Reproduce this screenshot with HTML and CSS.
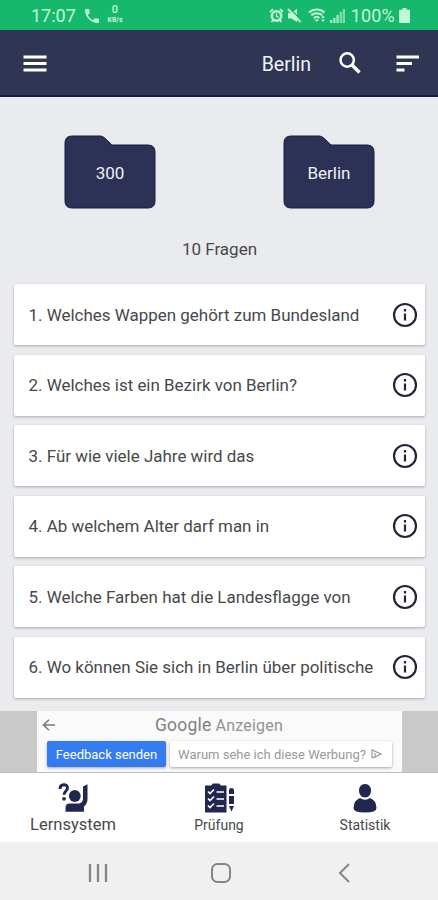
FILE: index.html
```html
<!DOCTYPE html>
<html lang="de">
<head>
<meta charset="utf-8">
<title>Lernsystem</title>
<link rel="stylesheet" href="styles.css">
</head>
<body>
<div class="phone">
  <div class="status">
    <span class="clock">17:07</span>
    <svg class="call" width="14" height="14" viewBox="3 3 18 18"><path fill="currentColor" d="M6.600 10.800c1.400 2.800 3.800 5.100 6.600 6.600l2.200-2.200c.3-.3.700-.4 1-.2 1.100.4 2.300.6 3.600.6.600 0 1 .4 1 1V20c0 .6-.4 1-1 1C10.600 21 3 13.400 3 4c0-.6.400-1 1-1h3.500c.6 0 1 .4 1 1 0 1.200.2 2.400.6 3.600.1.300 0 .7-.2 1z"/></svg>
    <span class="speed"><b>0</b><i>KB/s</i></span>
    <span class="right">
      <svg width="15" height="15" viewBox="0 0 15 15" fill="none" stroke="currentColor"><circle cx="7.500" cy="8" r="4.700" stroke-width="2.600"/><path stroke-width="1.800" d="M1 4l3-2.800M14 4l-3-2.800M2.500 14l1.800-2M12.500 14l-1.800-2"/><path stroke-width="1.300" d="M7.500 5.500v2.800l2 1"/></svg>
      <svg class="mute" width="15" height="15" viewBox="0 0 15 15"><path fill="currentColor" d="M1 5h3.500L10 .8V14l-5.500-3.500H1z"/><path d="M2.500 0l12.500 13" stroke="#16b96b" stroke-width="1.500"/><path d="M1 1l12.500 13" stroke="currentColor" stroke-width="2"/></svg>
      <svg class="wifi" width="19" height="15" viewBox="0 0 19 15" fill="none" stroke="currentColor" stroke-width="1.900"><path d="M1 4.500c4.500-4 11-4 15.500 0M3.300 7.300c3-2.700 8-2.700 11 0M5.800 10c1.800-1.500 4-1.500 5.500 0"/><path fill="currentColor" stroke="none" d="M6.500 11.500h4.500l-2.200 2.500zM13 10l2-2.500L17 10zM13 11.500h4L15 14z"/></svg>
      <svg class="signal" width="15" height="14" viewBox="0 0 15 14" fill="currentColor"><path opacity=".8" d="M0 11h2.300v3H0zM3.200 9h2.300v5H3.200zM6.400 6h2.300v8H6.400z"/><path opacity=".6" d="M9.600 3h2.300v11H9.600zM12.700 0H15v14h-2.300z"/></svg>
      <span class="percent">100%</span>
      <svg width="11" height="15" viewBox="0 0 11 15"><path fill="currentColor" d="M3.500 0h4v1.800H10q1 0 1 1V14q0 1-1 1H1q-1 0-1-1V2.800q0-1 1-1h2.500z"/></svg>
    </span>
  </div>
  <header class="appbar">
    <svg class="menu" width="24" height="18" viewBox="0 0 24 18" fill="#fff"><path d="M.5 1.500h23v3H.5zM.5 8h23v3H.5zM.5 14.500h23v3H.5z"/></svg>
    <span class="title">Berlin</span>
    <svg class="search" width="24" height="24" viewBox="0 0 24 24" fill="none" stroke="#fff"><circle cx="9.200" cy="9" r="6.700" stroke-width="2.500"/><path d="M14 14l7.500 7.500" stroke-width="3.300"/></svg>
    <svg class="sort" width="24" height="18" viewBox="0 0 24 18" fill="#fff"><path d="M.5 1.500H23v3H.5zM.5 8h15.500v3H.5zM.5 14.500h8v3H.5z"/></svg>
  </header>
  <main>
    <div class="folders">
      <div class="folder"><svg width="92" height="74" viewBox="0 0 92 74"><path d="M8 1h28q2.500 0 4.500 1.800L48 10h36q7 0 7 7v49q0 7-7 7H8q-7 0-7-7V8q0-7 7-7z"/></svg><span>300</span></div>
      <div class="folder"><svg width="92" height="74" viewBox="0 0 92 74"><path d="M8 1h28q2.500 0 4.500 1.800L48 10h36q7 0 7 7v49q0 7-7 7H8q-7 0-7-7V8q0-7 7-7z"/></svg><span>Berlin</span></div>
    </div>
    <p class="count">10 Fragen</p>
    <div class="list">
      <div class="card"><span>1. Welches Wappen gehört zum Bundesland</span><svg class="info" viewBox="0 0 26 26"><circle cx="13" cy="13" r="11"/><path d="M13 11.500v7M13 7v2.500"/></svg></div>
      <div class="card"><span>2. Welches ist ein Bezirk von Berlin?</span><svg class="info" viewBox="0 0 26 26"><circle cx="13" cy="13" r="11"/><path d="M13 11.500v7M13 7v2.500"/></svg></div>
      <div class="card"><span>3. Für wie viele Jahre wird das</span><svg class="info" viewBox="0 0 26 26"><circle cx="13" cy="13" r="11"/><path d="M13 11.500v7M13 7v2.500"/></svg></div>
      <div class="card"><span>4. Ab welchem Alter darf man in</span><svg class="info" viewBox="0 0 26 26"><circle cx="13" cy="13" r="11"/><path d="M13 11.500v7M13 7v2.500"/></svg></div>
      <div class="card"><span>5. Welche Farben hat die Landesflagge von</span><svg class="info" viewBox="0 0 26 26"><circle cx="13" cy="13" r="11"/><path d="M13 11.500v7M13 7v2.500"/></svg></div>
      <div class="card"><span>6. Wo können Sie sich in Berlin über politische</span><svg class="info" viewBox="0 0 26 26"><circle cx="13" cy="13" r="11"/><path d="M13 11.500v7M13 7v2.500"/></svg></div>
    </div>
  </main>
  <div class="ad">
    <div class="adbox">
      <div class="adtop">
        <svg width="14" height="12" viewBox="0 0 14 12" fill="none" stroke="#777" stroke-width="1.500"><path d="M13 6H1.500M7 .8L1.500 6 7 11.200"/></svg>
        <span class="brand"><b>Google</b> Anzeigen</span>
      </div>
      <div class="adbuttons">
        <span class="feedback">Feedback senden</span>
        <span class="why">Warum sehe ich diese Werbung? <svg width="11" height="10" viewBox="0 0 11 10" fill="none" stroke="#999" stroke-width="1.200"><path d="M1 9V1l9 4-6 3V4M1 9l3-1"/></svg></span>
      </div>
    </div>
  </div>
  <nav>
    <div class="tab active">
      <svg width="30" height="30" viewBox="0 0 30 30"><path d="M2 6C2 .5 9.500.5 9.500 5 9.500 8 6 8 6 11.800" fill="none" stroke="#222750" stroke-width="2.900"/><circle cx="6" cy="15.800" r="1.900"/><circle cx="16.800" cy="13" r="5.900"/><path d="M25 3.500l4.500-2.200V16q0 5-3.500 7.500v5.300H7.500v-4q0-4.300 4.300-4.300h9.500q3.700-1 3.700-5z"/></svg>
      <span>Lernsystem</span>
    </div>
    <div class="tab">
      <svg width="30" height="30" viewBox="0 0 30 30"><path d="M1 2.500h6L9 .5h6l2 2h5.500v27H1z"/><path d="M4 8.500l2 2 4-4M4 15.500l2 2 4-4M4 22.500l2 2 4-4M12.500 9H20M12.500 16H20M12.500 23H20" fill="none" stroke="#fff" stroke-width="1.600"/><path d="M25 7q0-2 2.500-2T30 7v4h-5zM25 13h5v8h-5zM25 23h5l-2.500 5.500z"/></svg>
      <span>Prüfung</span>
    </div>
    <div class="tab">
      <svg width="24" height="30" viewBox="0 0 24 30"><path d="M12 1c4 0 6 3 6 6.500s-2 7-6 7-6-3.500-6-7S8 1 12 1z"/><path d="M7 15q5 3.500 10 0 6 2 6.500 10 0 4.500-11.500 4.500T.5 25Q1 17 7 15z"/></svg>
      <span>Statistik</span>
    </div>
  </nav>
  <div class="system">
    <svg width="20" height="20" viewBox="0 0 20 20" stroke="#858585" stroke-width="2.300"><path d="M2 1v18M10 1v18M18 1v18"/></svg>
    <svg width="20" height="20" viewBox="0 0 20 20" fill="none" stroke="#858585" stroke-width="2"><rect x="1" y="1" width="18" height="18" rx="5.500"/></svg>
    <svg class="back" width="12" height="20" viewBox="0 0 12 20" fill="none" stroke="#858585" stroke-width="2"><path d="M11 1L2 10l9 9"/></svg>
  </div>
</div>
</body>
</html>
```

FILE: styles.css
```css
* { box-sizing: border-box; }
body { margin: 0; font-family: Roboto, "Liberation Sans", sans-serif; color: #48484a; }
svg { display: block; flex: none; }
span { white-space: nowrap; }
.phone { width: 438px; height: 900px; display: flex; flex-direction: column; overflow: hidden; }
.status { height: 30px; flex: none; background: #16b96b; color: #c4f5d9; display: flex; align-items: center; padding: 1px 28px 0 31px; font-size: 18px; }
.clock { width: 45px; }
.call { margin-left: 9px; }
.speed { display: flex; flex-direction: column; align-items: center; width: 18px; margin-left: 7px; }
.speed b { font-size: 11px; line-height: 13px; font-weight: 500; margin-top: -4px; }
.speed i { font-size: 7px; line-height: 8px; font-style: normal; font-weight: 700; }
.right { margin-left: auto; display: flex; align-items: center; }
.mute { margin-left: 3px; }
.wifi { margin-left: 6px; }
.signal { margin-left: 3px; }
.percent { margin: 0 4px 0 6px; letter-spacing: .2px; }
.appbar { height: 67px; flex: none; background: #303553; border-bottom: 2px solid #171b46; display: flex; align-items: center; padding: 0 18px 0 23px; color: #f2f2f5; }
.title { margin-left: auto; font-size: 19.500px; padding-top: 3px; }
.search { margin-left: 27px; }
.sort { margin-left: 34px; }
main { height: 614px; flex: none; background: #e9ebee; padding: 38px 13px 0 14px; }
.folders { display: flex; justify-content: space-between; padding: 0 50px; }
.folder { display: grid; place-items: center; }
.folder > * { grid-area: 1 / 1; }
.folder path { fill: #2c3155; stroke: #171b46; stroke-width: 1; }
.folder span { color: #f0f0f3; font-size: 17px; padding-top: 1px; }
.count { margin: 29px 0 0; text-align: center; font-size: 17px; line-height: 22px; }
.list { display: flex; flex-direction: column; gap: 9.600px; margin-top: 24px; }
.card { height: 61px; background: #fff; border-radius: 2px; box-shadow: 0 1px 3px rgba(0, 0, 0, .28); display: flex; align-items: center; justify-content: space-between; padding: 0 7px 0 14.500px; font-size: 16.970px; }
.info { width: 26px; height: 26px; fill: none; stroke: #22243b; stroke-width: 2.200; }
.ad { height: 62px; flex: none; background: #c9c9c9; border-bottom: 1px solid #bbb; padding-left: 37px; }
.adbox { width: 365px; height: 61px; background: #fafafa; }
.adtop { display: flex; align-items: center; height: 27px; padding-left: 5px; color: #929292; }
.brand { margin-left: 99px; font-size: 16px; letter-spacing: .2px; }
.brand b { font-weight: 400; font-size: 17.500px; color: #808080; }
.adbuttons { display: flex; gap: 4px; padding: 3px 0 0 10px; font-size: 13px; }
.feedback, .why { height: 26px; display: flex; align-items: center; justify-content: center; border-radius: 2px; box-shadow: 0 1px 3px rgba(0, 0, 0, .35); }
.feedback { width: 119px; background: #347bef; color: #fff; }
.why { width: 222px; gap: 5px; padding-right: 2px; background: #fff; color: #999; }
nav { height: 69px; flex: none; display: grid; grid-template-columns: repeat(3, 1fr); background: #fff; padding-top: 10px; }
.tab { display: flex; flex-direction: column; align-items: center; gap: 3px; font-size: 14px; line-height: 18px; }
.tab svg { fill: #222750; }
.active { font-size: 16.500px; }
.system { height: 58px; background: #f0f0f0; display: flex; align-items: center; gap: 103px; padding: 4px 0 0 88px; }
.back { margin-left: 4px; }
```
